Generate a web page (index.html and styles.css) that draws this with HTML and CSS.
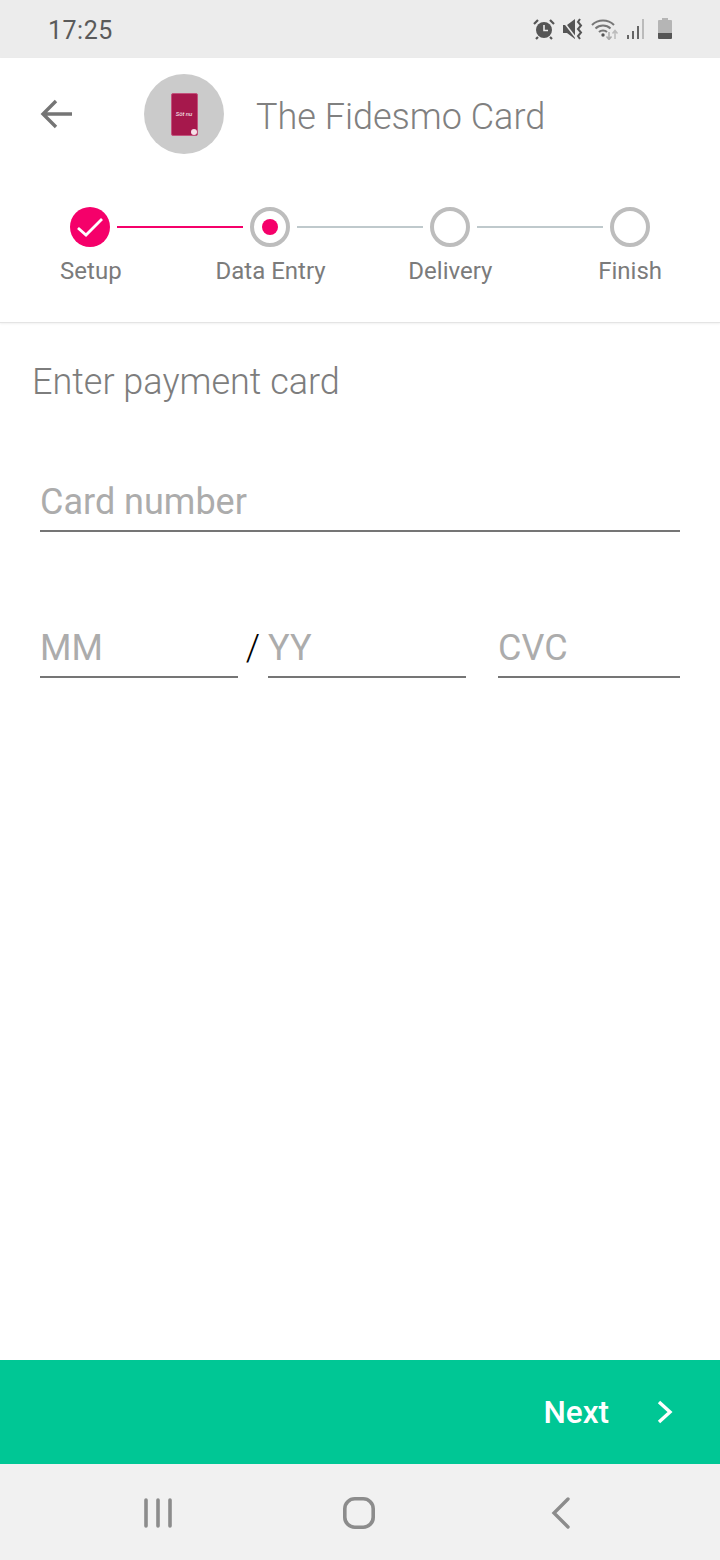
FILE: index.html
```html
<!DOCTYPE html>
<html lang="en">
<head>
  <meta charset="UTF-8" />
  <meta name="viewport" content="width=device-width, initial-scale=1.0" />
  <title>The Fidesmo Card</title>
  <link rel="stylesheet" href="styles.css">
</head>
<body>
  <div class="status-bar">
    <span class="status-time">17:25</span>
    <div class="status-icons">
      <!-- alarm -->
      <svg width="22" height="22" viewBox="0 0 22 22">
        <circle cx="11" cy="12" r="8" fill="#555"/>
        <path d="M11 7v5.500h4" fill="none" stroke="#ececec" stroke-width="1.600"/>
        <path d="M1 6l4-4M21 6l-4-4M5 19l-2 2M17 19l2 2" stroke="#555" stroke-width="2.200" fill="none"/>
      </svg>
      <!-- muted -->
      <svg width="22" height="22" viewBox="0 0 22 22">
        <path d="M1 7h4l8-6v20l-8-6H1z" fill="#555"/>
        <path d="M1 3l13 17" stroke="#ececec" stroke-width="1.500"/>
        <path d="M18 1l-2 3 3 3.500-3 3.500 3 3.500-3 3.500 2 3" stroke="#555" stroke-width="2" fill="none"/>
      </svg>
      <!-- wifi -->
      <svg width="28" height="22" viewBox="0 0 28 22">
        <path d="M1 7c6-6 16-6 22 0" stroke="#777" stroke-width="2" fill="none"/>
        <path d="M4.500 10.500c4-4 11-4 15 0" stroke="#777" stroke-width="2" fill="none"/>
        <path d="M8 14c2-2 6-2 8 0" stroke="#777" stroke-width="2" fill="none"/>
        <circle cx="12" cy="17" r="1.700" fill="#555"/>
        <path d="M18 14v7M15.500 18.500l2.500 3 2.500-3" stroke="#aaa" stroke-width="1.500" fill="none"/>
        <path d="M24 21v-8M21.500 15.500l2.500-3 2.500 3" stroke="#bbb" stroke-width="1.500" fill="none"/>
      </svg>
      <!-- signal -->
      <svg width="20" height="22" viewBox="0 0 20 22">
        <rect x="1" y="17" width="2" height="4" fill="#666"/>
        <rect x="6" y="13" width="2" height="8" fill="#666"/>
        <rect x="11" y="8" width="2" height="13" fill="#666"/>
        <rect x="16" y="1" width="2" height="20" fill="#bbb"/>
      </svg>
      <!-- battery -->
      <svg class="battery" width="14" height="22" viewBox="0 0 14 22">
        <path d="M4 0h6v2h3a1 1 0 0 1 1 1v12H0V3a1 1 0 0 1 1-1h3z" fill="#b5b5b5"/>
        <path d="M0 15h14v5a1 1 0 0 1-1 1H1a1 1 0 0 1-1-1z" fill="#555"/>
      </svg>
    </div>
  </div>

  <header class="top-card">
    <div class="title-row">
      <svg class="back-arrow" width="34" height="32" viewBox="0 0 34 32">
        <path d="M33 16H4M17 3L4 16l13 13" fill="none" stroke="#757575" stroke-width="3.400"/>
      </svg>
      <div class="app-logo">
        <div class="mini-card">
          <span class="mini-card-text">Söt nu</span>
          <span class="mini-card-heart"></span>
        </div>
      </div>
      <h1 class="title">The Fidesmo Card</h1>
    </div>

    <div class="stepper">
      <div class="step-track">
        <span class="dot done">
          <svg width="40" height="40" viewBox="0 0 40 40">
            <path d="M8 21l8 7 16-16" fill="none" stroke="#fff" stroke-width="2.800"/>
          </svg>
        </span>
        <span class="line line-done"></span>
        <span class="dot current"><span class="dot-inner"></span></span>
        <span class="line"></span>
        <span class="dot"></span>
        <span class="line"></span>
        <span class="dot"></span>
      </div>
      <div class="step-labels">
        <span>Setup</span>
        <span>Data Entry</span>
        <span>Delivery</span>
        <span>Finish</span>
      </div>
    </div>
  </header>

  <main class="form">
    <h2 class="form-title">Enter payment card</h2>
    <div class="field field-card">Card number</div>
    <div class="field-row">
      <div class="field field-date">MM</div>
      <span class="slash">/</span>
      <div class="field field-date">YY</div>
      <div class="field field-cvc">CVC</div>
    </div>
  </main>

  <div class="next-bar">
    <span class="next-label">Next</span>
    <svg width="18" height="26" viewBox="0 0 18 26">
      <path d="M3 3l11 10L3 23" fill="none" stroke="#fff" stroke-width="3.400"/>
    </svg>
  </div>

  <nav class="nav-bar">
    <svg width="30" height="30" viewBox="0 0 30 30">
      <path d="M3 2v26M15 2v26M27 2v26" stroke="#8c8c8c" stroke-width="3.600" stroke-linecap="round" fill="none"/>
    </svg>
    <svg width="32" height="32" viewBox="0 0 32 32">
      <rect x="1.800" y="1.800" width="28.400" height="28.400" rx="10" fill="none" stroke="#8c8c8c" stroke-width="3.600"/>
    </svg>
    <svg width="22" height="34" viewBox="0 0 22 34">
      <path d="M18 3L4 17l14 14" fill="none" stroke="#8c8c8c" stroke-width="3.400" stroke-linecap="round"/>
    </svg>
  </nav>
</body>
</html>
```

FILE: styles.css
```css
* {
  box-sizing: border-box;
}

body {
  margin: 0;
  width: 720px;
  height: 1560px;
  display: flex;
  flex-direction: column;
  background-color: #fff;
  font-family: Roboto, "Liberation Sans", sans-serif;
}

/* Status bar */
.status-bar {
  height: 58px;
  flex: none;
  display: flex;
  justify-content: space-between;
  align-items: center;
  padding: 0 48px;
  background-color: #ececec;
}

.status-time {
  margin-top: 2px;
  font-size: 25px;
  color: #5a5a5a;
  letter-spacing: 0.5px;
}

.status-icons {
  display: flex;
  align-items: center;
  gap: 7px;
}

.battery {
  margin-left: 5px;
}

/* Header and stepper */
.top-card {
  height: 265px;
  flex: none;
  border-bottom: 1px solid #e4e4e4;
  box-shadow: 0 1px 2px rgba(0, 0, 0, 0.06);
}

.title-row {
  display: flex;
  align-items: center;
  padding: 16px 0 0 39px;
}

.back-arrow {
  margin-right: 71px;
}

.app-logo {
  width: 80px;
  height: 80px;
  display: flex;
  justify-content: center;
  align-items: center;
  border-radius: 50%;
  background-color: #cbcbcb;
}

.mini-card {
  width: 27px;
  height: 43px;
  position: relative;
  display: flex;
  justify-content: center;
  padding-top: 17px;
  border-radius: 2px;
  background-color: #a6184c;
  border: 1px solid #c2527c;
}

.mini-card-text {
  font-size: 6px;
  line-height: 6px;
  font-style: italic;
  color: #fff;
  white-space: nowrap;
}

.mini-card-heart {
  position: absolute;
  right: 0;
  bottom: 0;
  width: 6px;
  height: 6px;
  border-radius: 50%;
  background-color: #f6dfe7;
}

.title {
  margin: 5px 0 0 32px;
  font-size: 36px;
  font-weight: 300;
  color: #808080;
}

.stepper {
  margin-top: 53px;
}

.step-track {
  display: flex;
  align-items: center;
  padding: 0 70px;
}

.dot {
  width: 40px;
  height: 40px;
  flex: none;
  display: flex;
  justify-content: center;
  align-items: center;
  border-radius: 50%;
  border: 4px solid #bdbdbd;
}

.dot.done {
  border: none;
  background-color: #f5006a;
}

.dot-inner {
  width: 16px;
  height: 16px;
  border-radius: 50%;
  background-color: #f5006a;
}

.line {
  flex: 1;
  height: 2px;
  margin: 0 7px;
  background-color: #bfc9cc;
}

.line-done {
  background-color: #f5006a;
}

.step-labels {
  display: grid;
  grid-template-columns: repeat(4, 1fr);
  margin-top: 8px;
  padding-left: 1px;
  font-size: 24px;
  line-height: 32px;
  text-align: center;
  color: #7b7b7b;
}

/* Payment form */
.form {
  flex: 1;
  padding: 37px 40px 0;
}

.form-title {
  margin: 0 0 0 -8px;
  font-size: 36px;
  line-height: 44px;
  font-weight: 300;
  color: #7d7d7d;
}

.field {
  height: 52px;
  border-bottom: 2px solid #757575;
  font-size: 36px;
  line-height: 44px;
  font-weight: 400;
  color: #acacac;
}

.field-card {
  margin-top: 76px;
}

.field-row {
  display: flex;
  align-items: flex-end;
  margin-top: 90px;
}

.field-date {
  width: 198px;
}

.slash {
  width: 30px;
  margin-bottom: 4px;
  font-size: 36px;
  line-height: 52px;
  font-weight: 300;
  text-align: center;
  color: #000;
}

.field-cvc {
  width: 182px;
  margin-left: 32px;
}

/* Bottom bars */
.next-bar {
  height: 104px;
  flex: none;
  display: flex;
  justify-content: flex-end;
  align-items: center;
  gap: 47px;
  padding-right: 46px;
  background-color: #00c795;
}

.next-label {
  font-size: 31.500px;
  font-weight: 500;
  color: #fff;
}

.nav-bar {
  height: 96px;
  flex: none;
  display: grid;
  grid-template-columns: 158px 244px 160px;
  justify-items: center;
  align-items: center;
  padding: 1px 0 0 79px;
  background-color: #f1f1f1;
}
```
